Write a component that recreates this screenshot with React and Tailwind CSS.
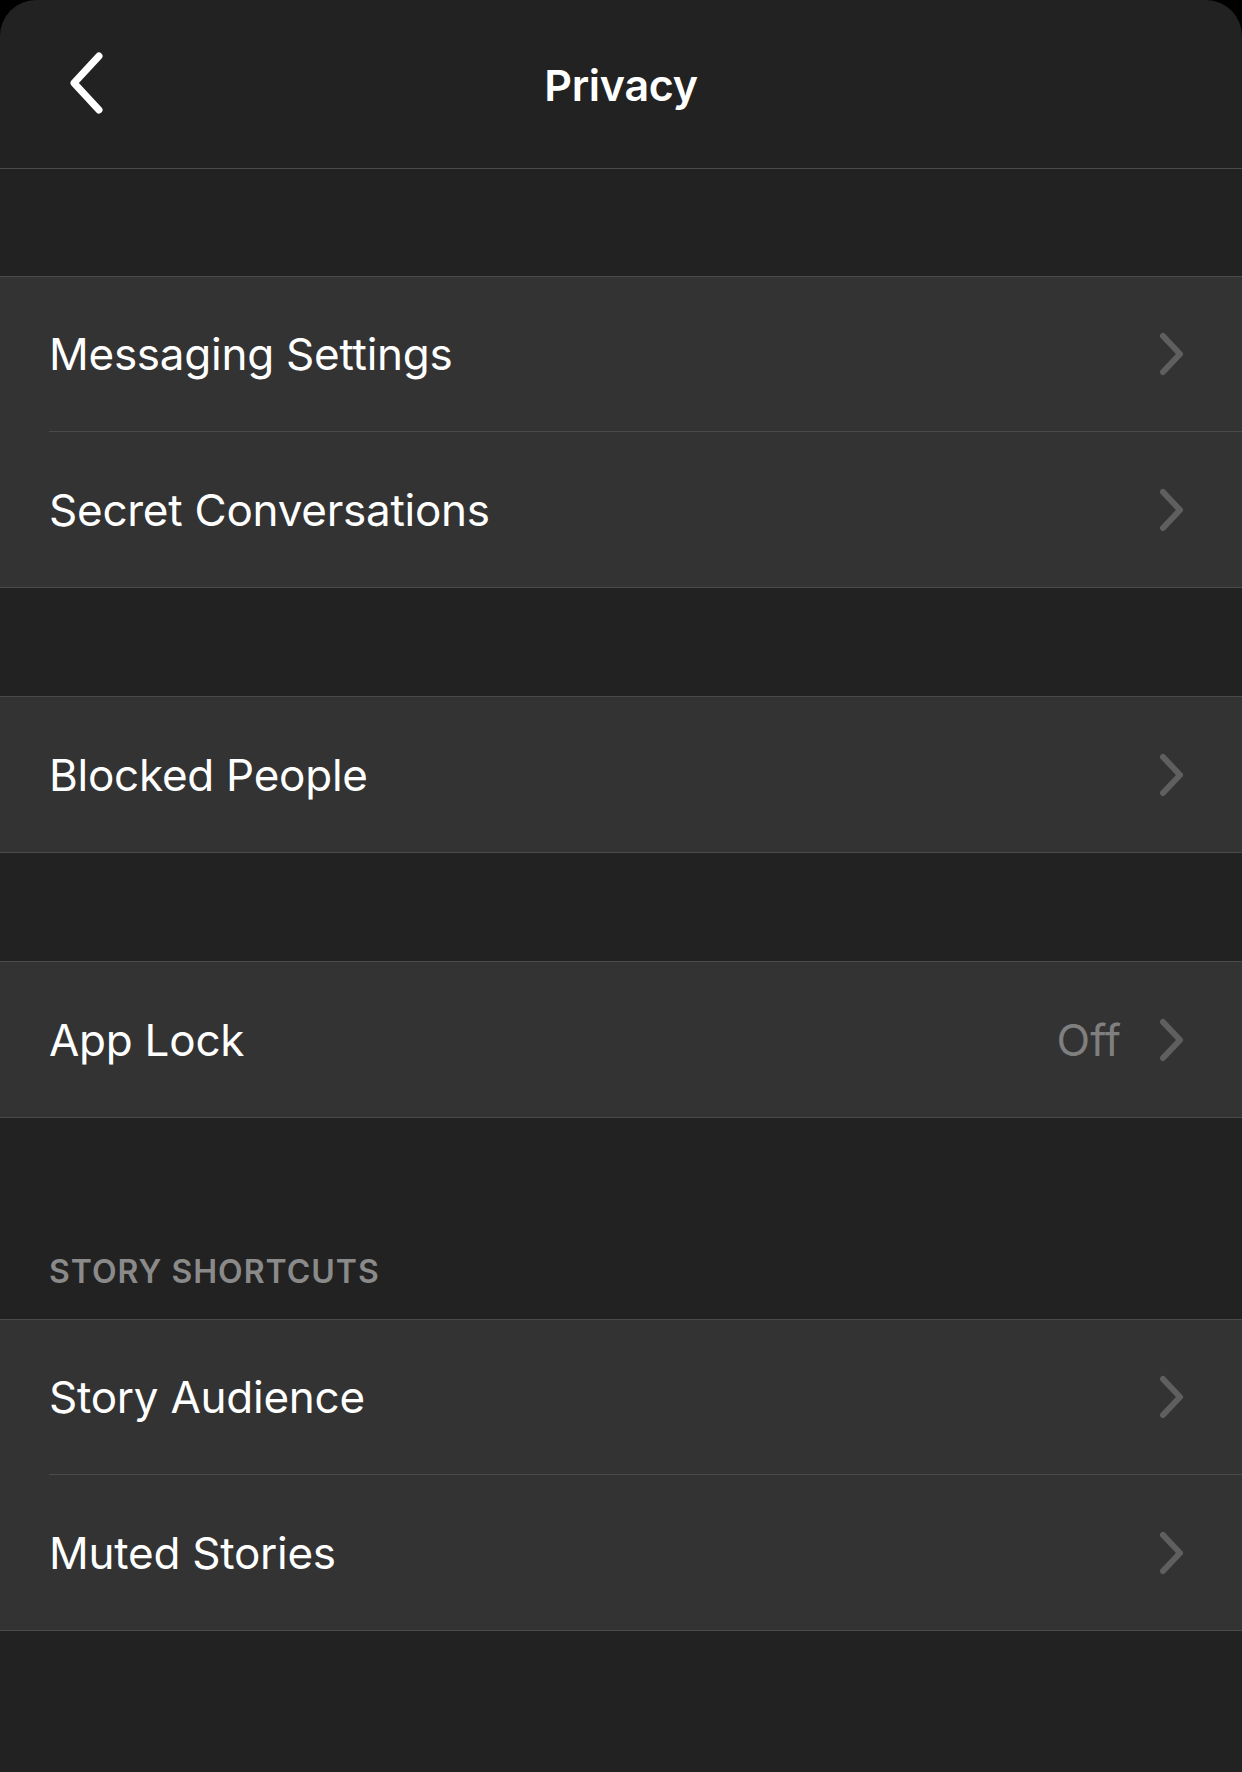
import React from "react";

const Chevron = () => (
  <svg width="26" height="44" viewBox="0 0 26 44" fill="none">
    <path d="M4 4 L21 22 L4 40" stroke="#5f5f5f" strokeWidth="6" strokeLinecap="round" strokeLinejoin="round" />
  </svg>
);

const Row = ({ label, value, last }) => (
  <div className="flex h-[155px] items-stretch pl-[49px]">
    <div className={`flex flex-1 items-center pr-[57px] ${last ? "" : "border-b border-[#4a4a4a]"}`}>
      <span className="flex-1 text-[44px] leading-none text-white tracking-[-0.25px]">{label}</span>
      {value && <span className="mr-[38px] text-[44px] leading-none text-[#7f7f7f]">{value}</span>}
      <Chevron />
    </div>
  </div>
);

const Group = ({ items }) => (
  <div className="border-y border-[#4a4a4a] bg-[#333333]">
    {items.map((it, i) => (
      <Row key={it.label} label={it.label} value={it.value} last={i === items.length - 1} />
    ))}
  </div>
);

export default function App() {
  return (
    <div className="min-h-[1772px] w-[1242px] bg-black" style={{ fontFamily: "Inter, 'Noto Sans', sans-serif" }}>
      <div className="flex min-h-[1772px] flex-col overflow-hidden rounded-t-[36px] bg-[#222222]">
        <div className="relative flex h-[169px] items-center justify-center border-b border-[#4a4a4a]">
          <div className="absolute left-[64px] top-[50px]">
            <svg width="46" height="66" viewBox="0 0 46 66" fill="none">
              <path d="M35 6 L10 33 L35 60" stroke="white" strokeWidth="7" strokeLinecap="round" strokeLinejoin="round" />
            </svg>
          </div>
          <span className="mt-[2px] text-[43px] font-semibold leading-none text-white tracking-[-0.3px]">Privacy</span>
        </div>
        <div className="h-[107px]" />
        <Group items={[{ label: "Messaging Settings" }, { label: "Secret Conversations" }]} />
        <div className="h-[108px]" />
        <Group items={[{ label: "Blocked People" }]} />
        <div className="h-[108px]" />
        <Group items={[{ label: "App Lock", value: "Off" }]} />
        <div className="flex h-[201px] items-end pb-[31px] pl-[49px]">
          <span className="text-[32px] font-semibold leading-none text-[#8a8a8a] tracking-[1px]">STORY SHORTCUTS</span>
        </div>
        <Group items={[{ label: "Story Audience" }, { label: "Muted Stories" }]} />
        <div className="flex-1" />
      </div>
    </div>
  );
}
